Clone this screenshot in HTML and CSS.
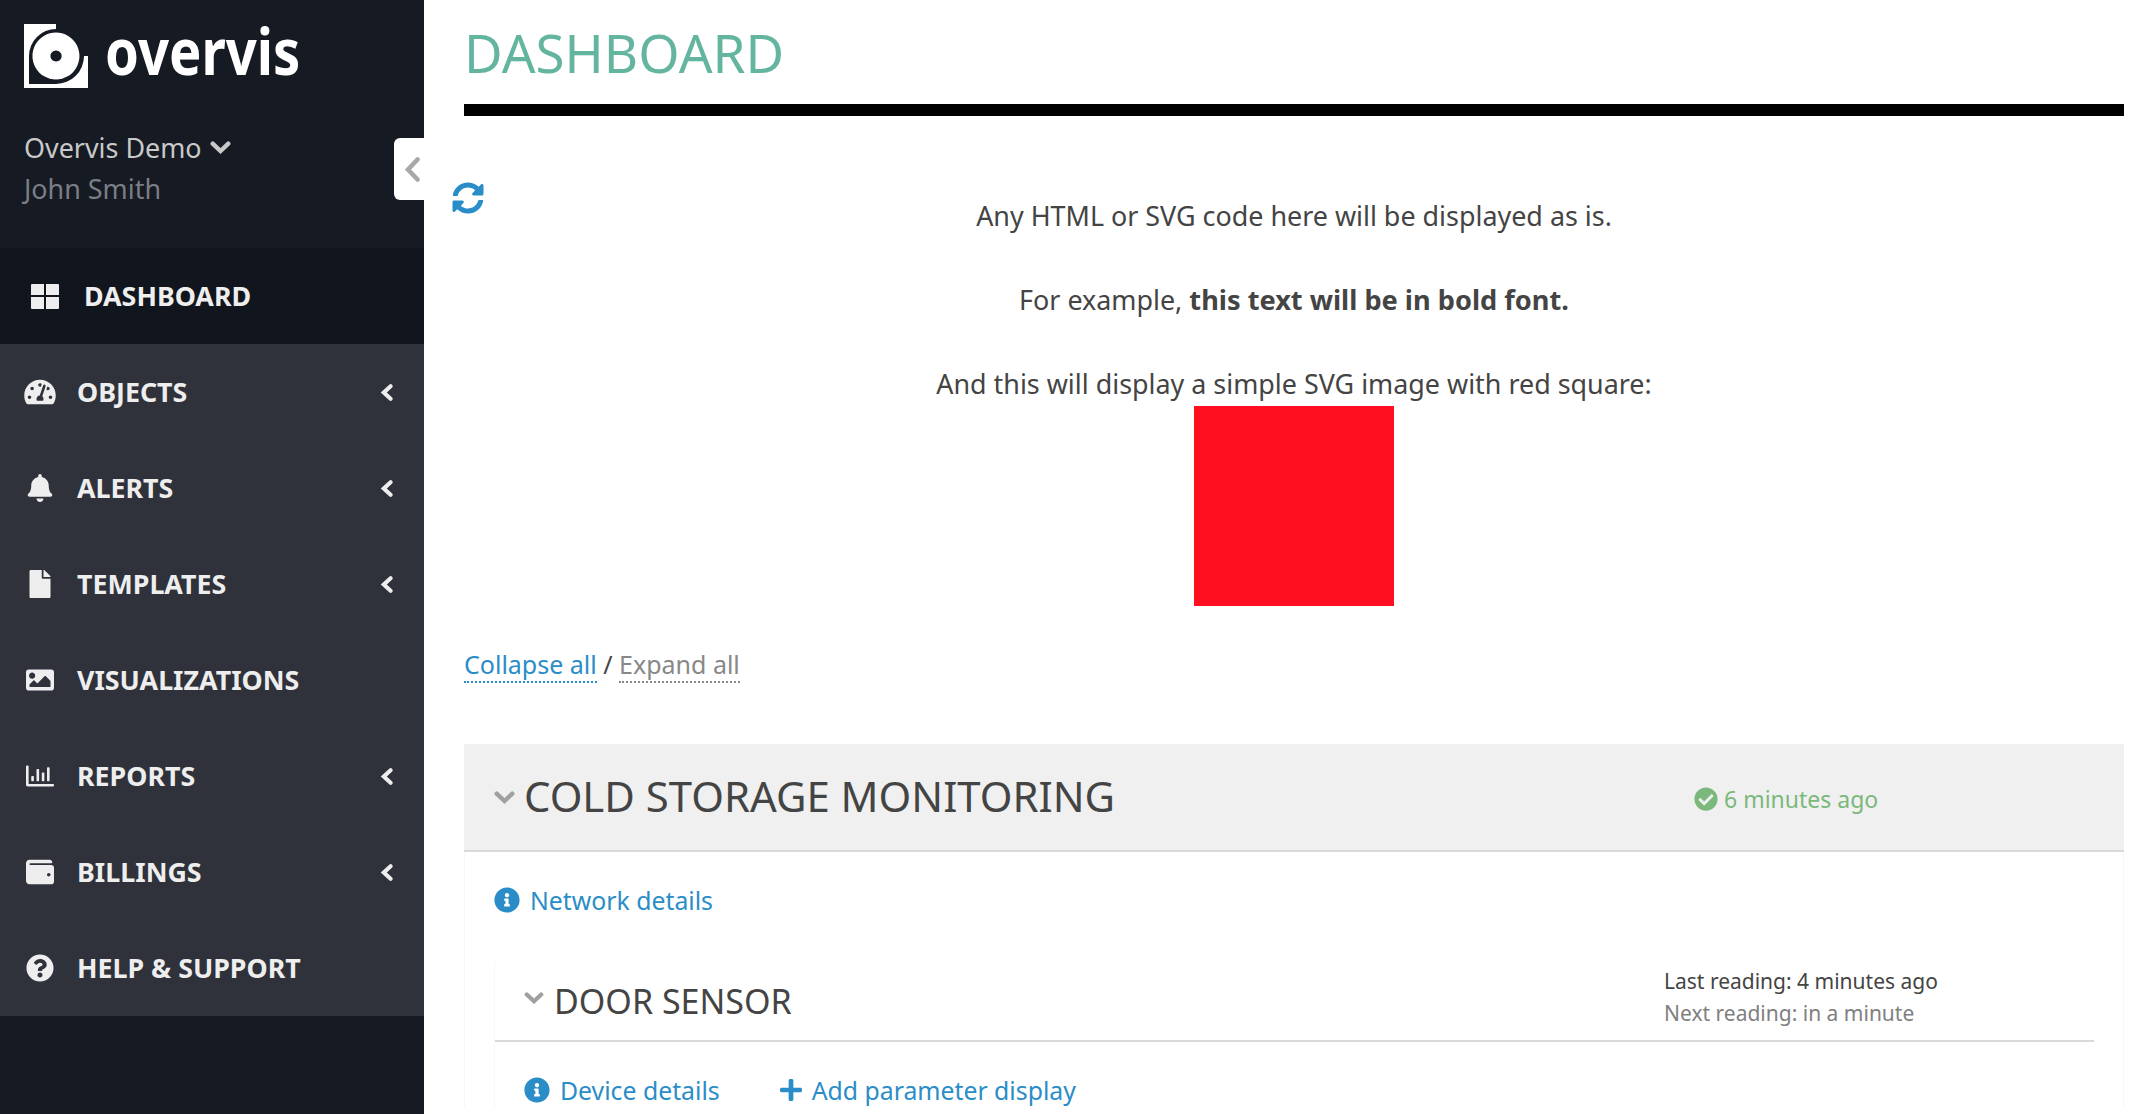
FILE: index.html
```html
<!DOCTYPE html>
<html lang="en">
<head>
<meta charset="utf-8">
<title>Overvis Dashboard</title>
<link rel="stylesheet" href="styles.css">
</head>
<body>
<div class="app">
  <aside class="sidebar">
    <div class="brand">
      <svg class="logo" viewBox="0 0 64 64"><path fill="#fff" d="M0 0H32V5A27 27 0 0 0 5 32V60H32A28 28 0 0 0 60 32H64V64H0Z"/><path fill="#fff" fill-rule="evenodd" d="M32 8.5A23.5 23.5 0 1 1 31.9 8.5ZM32 26.4A5.6 5.6 0 1 0 32.1 26.4Z"/></svg>
      <span class="wordmark">overvis</span>
    </div>
    <div class="account">
      <div class="org">Overvis Demo <svg class="chev-down org-caret" viewBox="0 0 21 13"><path d="M2.7 2.7L10.5 10L18.3 2.7"/></svg></div>
      <div class="user">John Smith</div>
    </div>
    <button class="collapse-tab" aria-label="Collapse"><svg class="chev-left" viewBox="0 0 15 25"><path d="M12.5 2.5L3 12.5L12.5 22.5"/></svg></button>
    <nav class="nav">
      <a class="nav-item active"><span class="nav-icon"><svg class="i-dash" viewBox="0 0 28 25"><path d="M1 0H13V11H0V1A1 1 0 0 1 1 0ZM15 0H27A1 1 0 0 1 28 1V11H15ZM0 13H13V25H1A1 1 0 0 1 0 24ZM15 13H28V24A1 1 0 0 1 27 25H15Z"/></svg></span><span class="nav-label">DASHBOARD</span></a>
      <a class="nav-item"><span class="nav-icon"><svg viewBox="0 0 576 512"><path d="M288 32C128.94 32 0 160.94 0 320c0 52.8 14.25 102.26 39.06 144.8 5.61 9.62 16.3 15.2 27.44 15.2h443c11.14 0 21.83-5.58 27.44-15.2C561.75 422.26 576 372.8 576 320c0-159.06-128.94-288-288-288zm0 64c14.71 0 26.58 10.13 30.32 23.65-1.11 2.26-2.64 4.23-3.45 6.67l-9.22 27.67c-5.13 3.49-10.97 6.01-17.64 6.01-17.67 0-32-14.33-32-32S270.33 96 288 96zM96 384c-17.67 0-32-14.33-32-32s14.33-32 32-32 32 14.33 32 32-14.33 32-32 32zm48-160c-17.67 0-32-14.33-32-32s14.33-32 32-32 32 14.33 32 32-14.33 32-32 32zm246.77-72.41l-61.33 184C343.13 347.33 352 364.54 352 384c0 11.72-3.38 22.55-8.88 32H232.88c-5.5-9.45-8.88-20.28-8.88-32 0-33.94 26.5-61.43 59.9-63.59l61.34-184.01c4.17-12.56 17.73-19.45 30.36-15.17 12.57 4.19 19.35 17.79 15.17 30.36zm14.66 57.2l15.52-46.55c3.47-1.29 7.13-2.23 11.05-2.23 17.67 0 32 14.33 32 32s-14.33 32-32 32c-11.38-.01-20.89-6.28-26.57-15.22zM480 384c-17.67 0-32-14.33-32-32s14.33-32 32-32 32 14.33 32 32-14.33 32-32 32z"/></svg></span><span class="nav-label">OBJECTS</span><svg class="chev-left nav-chev" viewBox="0 0 12 17"><path d="M9.6 2.2L2.8 8.5L9.6 14.8"/></svg></a>
      <a class="nav-item"><span class="nav-icon"><svg viewBox="0 0 448 512"><path d="M224 512c35.32 0 63.97-28.65 63.97-64H160.03c0 35.35 28.65 64 63.97 64zm215.39-149.71c-19.32-20.76-55.47-51.99-55.47-154.29 0-77.7-54.48-139.9-127.94-155.16V32c0-17.67-14.32-32-31.98-32s-31.98 14.33-31.98 32v20.84C118.56 68.1 64.08 130.3 64.08 208c0 102.3-36.15 133.53-55.47 154.29-6 6.45-8.66 14.16-8.61 21.71.11 16.4 12.98 32 32.1 32h383.8c19.12 0 32-15.6 32.1-32 .05-7.55-2.61-15.27-8.61-21.71z"/></svg></span><span class="nav-label">ALERTS</span><svg class="chev-left nav-chev" viewBox="0 0 12 17"><path d="M9.6 2.2L2.8 8.5L9.6 14.8"/></svg></a>
      <a class="nav-item"><span class="nav-icon"><svg viewBox="0 0 384 512"><path d="M224 136V0H24C10.7 0 0 10.7 0 24v464c0 13.3 10.7 24 24 24h336c13.3 0 24-10.7 24-24V160H248c-13.2 0-24-10.8-24-24zm160-14.1v6.1H256V0h6.1c6.4 0 12.5 2.5 17 7l97.9 98c4.5 4.5 7 10.6 7 16.9z"/></svg></span><span class="nav-label">TEMPLATES</span><svg class="chev-left nav-chev" viewBox="0 0 12 17"><path d="M9.6 2.2L2.8 8.5L9.6 14.8"/></svg></a>
      <a class="nav-item"><span class="nav-icon"><svg viewBox="0 0 512 512"><path d="M464 448H48c-26.51 0-48-21.49-48-48V112c0-26.51 21.49-48 48-48h416c26.51 0 48 21.49 48 48v288c0 26.51-21.49 48-48 48zM112 120c-30.928 0-56 25.072-56 56s25.072 56 56 56 56-25.072 56-56-25.072-56-56-56zM64 384h384V272l-87.515-87.515c-4.686-4.686-12.284-4.686-16.971 0L208 320l-55.515-55.515c-4.686-4.686-12.284-4.686-16.971 0L64 336v48z"/></svg></span><span class="nav-label">VISUALIZATIONS</span></a>
      <a class="nav-item"><span class="nav-icon"><svg viewBox="0 0 512 512"><path d="M396.8 352h22.4c6.4 0 12.8-6.4 12.8-12.8V108.8c0-6.4-6.4-12.8-12.8-12.8h-22.4c-6.4 0-12.8 6.4-12.8 12.8v230.4c0 6.4 6.4 12.8 12.8 12.8zm-192 0h22.4c6.4 0 12.8-6.4 12.8-12.8V140.8c0-6.4-6.4-12.8-12.8-12.8h-22.4c-6.4 0-12.8 6.4-12.8 12.8v198.4c0 6.4 6.4 12.8 12.8 12.8zm96 0h22.4c6.4 0 12.8-6.4 12.8-12.8V204.8c0-6.4-6.4-12.8-12.8-12.8h-22.4c-6.4 0-12.8 6.4-12.8 12.8v134.4c0 6.4 6.4 12.8 12.8 12.8zM496 400H48V80c0-8.84-7.16-16-16-16H16C7.16 64 0 71.16 0 80v336c0 17.67 14.33 32 32 32h464c8.84 0 16-7.16 16-16v-16c0-8.84-7.16-16-16-16zm-387.2-48h22.4c6.4 0 12.8-6.4 12.8-12.8v-70.4c0-6.4-6.4-12.8-12.8-12.8h-22.4c-6.4 0-12.8 6.4-12.8 12.8v70.4c0 6.4 6.4 12.8 12.8 12.8z"/></svg></span><span class="nav-label">REPORTS</span><svg class="chev-left nav-chev" viewBox="0 0 12 17"><path d="M9.6 2.2L2.8 8.5L9.6 14.8"/></svg></a>
      <a class="nav-item"><span class="nav-icon"><svg viewBox="0 0 512 512"><path d="M461.2 128H80c-8.84 0-16-7.16-16-16s7.16-16 16-16h384c8.84 0 16-7.16 16-16 0-26.51-21.49-48-48-48H64C28.65 32 0 60.65 0 96v320c0 35.35 28.65 64 64 64h397.2c28.02 0 50.8-21.53 50.8-48V176c0-26.47-22.78-48-50.8-48zM416 336c-17.67 0-32-14.33-32-32s14.33-32 32-32 32 14.33 32 32-14.33 32-32 32z"/></svg></span><span class="nav-label">BILLINGS</span><svg class="chev-left nav-chev" viewBox="0 0 12 17"><path d="M9.6 2.2L2.8 8.5L9.6 14.8"/></svg></a>
      <a class="nav-item"><span class="nav-icon"><svg viewBox="0 0 512 512"><path d="M504 256c0 136.997-111.043 248-248 248S8 392.997 8 256C8 119.083 119.043 8 256 8s248 111.083 248 248zM262.655 90c-54.497 0-89.255 22.957-116.549 63.758-3.536 5.286-2.353 12.415 2.715 16.258l34.699 26.31c5.205 3.947 12.621 3.008 16.665-2.122 17.864-22.658 30.113-35.797 57.303-35.797 20.429 0 45.698 13.148 45.698 32.958 0 14.976-12.363 22.667-32.534 33.976C247.128 238.528 216 254.941 216 296v4c0 6.627 5.373 12 12 12h56c6.627 0 12-5.373 12-12v-1.333c0-28.462 83.186-29.647 83.186-106.667 0-58.002-60.165-102-116.531-102zM256 338c-25.365 0-46 20.635-46 46 0 25.364 20.635 46 46 46s46-20.636 46-46c0-25.365-20.635-46-46-46z"/></svg></span><span class="nav-label">HELP &amp; SUPPORT</span></a>
    </nav>
  </aside>
  <main class="main">
    <h1 class="title">DASHBOARD</h1>
    <div class="custom">
      <svg class="refresh" viewBox="0 0 512 512"><path d="M370.72 133.28C339.458 104.008 298.888 87.962 255.848 88c-77.458.068-144.328 53.178-162.791 126.85-1.344 5.363-6.122 9.15-11.651 9.15H24.103c-7.498 0-13.194-6.807-11.807-14.176C33.933 94.924 134.813 8 256 8c66.448 0 126.791 26.136 171.315 68.685L463.03 40.97C478.149 25.851 504 36.559 504 57.941V192c0 13.255-10.745 24-24 24H345.941c-21.382 0-32.09-25.851-16.971-40.971l41.75-41.749zM32 296h134.059c21.382 0 32.09 25.851 16.971 40.971l-41.75 41.75c31.262 29.273 71.835 45.319 114.876 45.28 77.418-.07 144.315-53.144 162.787-126.849 1.344-5.363 6.122-9.15 11.651-9.15h57.304c7.498 0 13.194 6.807 11.807 14.176C478.067 417.076 377.187 504 256 504c-66.448 0-126.791-26.136-171.315-68.685L48.97 471.03C33.851 486.149 8 475.441 8 454.059V320c0-13.255 10.745-24 24-24z"/></svg>
      <p>Any HTML or SVG code here will be displayed as is.</p>
      <p>For example, <b class="strong">this text will be in bold font.</b></p>
      <p class="last">And this will display a simple SVG image with red square:</p>
      <svg class="square" viewBox="0 0 200 200"><rect width="200" height="200" fill="#ff0f1f"/></svg>
    </div>
    <div class="toggles"><a class="toggle blue">Collapse all</a> / <a class="toggle grey">Expand all</a></div>
    <section class="panel">
      <header class="panel-head">
        <svg class="chev-down caret-l" viewBox="0 0 21 13"><path d="M2.7 2.7L10.5 10L18.3 2.7"/></svg>
        <h2 class="panel-title">COLD STORAGE MONITORING</h2>
        <span class="status"><svg viewBox="0 0 512 512"><path d="M504 256c0 136.967-111.033 248-248 248S8 392.967 8 256 119.033 8 256 8s248 111.033 248 248zM227.314 387.314l184-184c6.248-6.248 6.248-16.379 0-22.627l-22.627-22.627c-6.248-6.249-16.379-6.249-22.628 0L216 308.118l-70.059-70.059c-6.248-6.248-16.379-6.248-22.628 0l-22.627 22.627c-6.248 6.248-6.248 16.379 0 22.627l104 104c6.249 6.249 16.379 6.249 22.628.001z"/></svg>6 minutes ago</span>
      </header>
      <div class="panel-body">
        <a class="link net"><svg viewBox="0 0 512 512"><path d="M256 8C119.043 8 8 119.083 8 256c0 136.997 111.043 248 248 248s248-111.003 248-248C504 119.083 392.957 8 256 8zm0 110c23.196 0 42 18.804 42 42s-18.804 42-42 42-42-18.804-42-42 18.804-42 42-42zm56 254c0 6.627-5.373 12-12 12h-88c-6.627 0-12-5.373-12-12v-24c0-6.627 5.373-12 12-12h12v-64h-12c-6.627 0-12-5.373-12-12v-24c0-6.627 5.373-12 12-12h64c6.627 0 12 5.373 12 12v100h12c6.627 0 12 5.373 12 12v24z"/></svg>Network details</a>
        <section class="device">
          <header class="device-head">
            <svg class="chev-down caret-s" viewBox="0 0 21 13"><path d="M2.7 2.7L10.5 10L18.3 2.7"/></svg>
            <h3 class="device-title">DOOR SENSOR</h3>
            <div class="readings"><div class="last-reading">Last reading: 4 minutes ago</div><div class="next-reading">Next reading: in a minute</div></div>
          </header>
          <div class="device-links">
            <a class="link"><svg viewBox="0 0 512 512"><path d="M256 8C119.043 8 8 119.083 8 256c0 136.997 111.043 248 248 248s248-111.003 248-248C504 119.083 392.957 8 256 8zm0 110c23.196 0 42 18.804 42 42s-18.804 42-42 42-42-18.804-42-42 18.804-42 42-42zm56 254c0 6.627-5.373 12-12 12h-88c-6.627 0-12-5.373-12-12v-24c0-6.627 5.373-12 12-12h12v-64h-12c-6.627 0-12-5.373-12-12v-24c0-6.627 5.373-12 12-12h64c6.627 0 12 5.373 12 12v100h12c6.627 0 12 5.373 12 12v24z"/></svg>Device details</a>
            <a class="link"><svg class="plus" viewBox="0 0 448 512"><path d="M416 208H272V64c0-17.67-14.33-32-32-32h-32c-17.67 0-32 14.33-32 32v144H32c-17.67 0-32 14.33-32 32v32c0 17.67 14.33 32 32 32h144v144c0 17.67 14.33 32 32 32h32c17.67 0 32-14.33 32-32V304h144c17.67 0 32-14.33 32-32v-32c0-17.67-14.33-32-32-32z"/></svg>Add parameter display</a>
          </div>
        </section>
      </div>
    </section>
  </main>
</div>
</body>
</html>
```
FILE: styles.css
```css
html, body { margin: 0; height: 100%; overflow: hidden; background: #fff; }
body { font-family: "Noto Sans", "Open Sans", sans-serif; font-size: 26.9px; line-height: 36px; color: #444; }
svg { display: block; fill: currentColor; flex: none; }
.chev-left, .chev-down { fill: none; stroke: currentColor; stroke-linecap: round; stroke-linejoin: miter; }
.app { display: flex; height: 1114px; overflow: hidden; }

.sidebar { position: relative; width: 424px; flex: none; background: #151a23; color: #eee; }
.brand { display: flex; align-items: flex-start; gap: 17px; height: 127px; padding: 24px 0 0 24px; box-sizing: border-box; }
.logo { width: 64px; height: 64px; }
.wordmark { display: block; font-weight: 700; font-size: 64px; line-height: 54px; color: #fff; transform: scaleX(.85); transform-origin: left center; }
.account { height: 121px; padding-left: 24px; box-sizing: border-box; font-size: 26.9px; line-height: 41px; }
.org { display: flex; align-items: center; gap: 8px; color: #c9c9c9; }
.org-caret { width: 21px; height: 13px; stroke-width: 4.4; }
.user { color: #7b7e85; }
.collapse-tab { position: absolute; top: 138px; right: 0; width: 30px; height: 62px; padding: 0 0 0 11px; border: 0; background: #fff; border-radius: 6px 0 0 6px; color: #a8a8a8; }
.collapse-tab svg { width: 15px; height: 25px; stroke-width: 4.6; }

.nav { display: flex; flex-direction: column; }
.nav-item { display: flex; align-items: center; height: 96px; padding: 0 31px 0 24px; background: #2f323b; font-weight: 700; font-size: 26.8px; color: #eee; }
.nav-icon { display: flex; justify-content: center; width: 32px; padding-right: 21px; }
.nav-icon svg { width: 32px; height: 28px; }
.nav-item.active { background: #11151d; }
.nav-item.active .nav-icon { width: 28px; padding: 0 25px 0 7px; }
.nav-item.active .nav-icon svg { width: 28px; height: 25px; }
.nav-label { flex: 1; }
.nav-chev { width: 12px; height: 17px; stroke-width: 4; }

.main { flex: 1; min-width: 0; padding: 0 32px 0 40px; }
.title { margin: 0; height: 104px; border-bottom: 12px solid #000; font-weight: 400; font-size: 53px; line-height: 106px; color: #64b5a0; }
.custom { position: relative; padding-top: 82px; text-align: center; }
.custom p { margin: 0 0 48px; }
.custom p.last { margin: 0 0 4px; }
.strong { font-size: 27.2px; }
.square { width: 200px; height: 200px; margin: 0 auto; }
.refresh { position: absolute; left: -12px; top: 66px; width: 32px; height: 32px; color: #2a8dc7; }
.toggles { margin-top: 40px; font-size: 25px; }
.toggle { border-bottom: 2px dotted; }
.blue { color: #2a8dc7; }
.grey { color: #888; }

.panel { margin-top: 62px; }
.panel-head { display: flex; align-items: center; height: 106px; padding-left: 30px; background: #f0f0f0; border-bottom: 2px solid #d9d9d9; }
.caret-l { width: 21px; height: 13px; margin-right: 9px; stroke-width: 4.4; color: #a0a0a0; }
.panel-title { margin: 0 0 2px; flex: 1; font-weight: 400; font-size: 41.9px; line-height: 60px; }
.status { display: flex; align-items: center; gap: 6px; width: 430px; padding-top: 3px; font-size: 23px; color: #7ab87c; }
.status svg { width: 24px; height: 24px; }
.panel-body { padding: 0 29px; border: solid #f8f8f8; border-width: 0 1px; }
.link { display: inline-flex; align-items: center; gap: 10px; font-size: 24.8px; color: #2a8dc7; }
.link svg { width: 26px; height: 26px; }
.link .plus { width: 22px; height: 26px; }
.net { margin-top: 30px; }
.device { margin-top: 40px; border-left: 1px solid #f8f8f8; }
.device-head { display: flex; align-items: center; height: 79px; padding-left: 29px; border-bottom: 2px solid #d9d9d9; }
.caret-s { width: 20px; height: 12px; margin: 0 10px 6px 0; stroke-width: 4.6; color: #a0a0a0; }
.device-title { margin: 0; flex: 1; font-weight: 400; font-size: 34px; }
.readings { width: 430px; margin-bottom: 7px; font-size: 21px; line-height: 32px; }
.next-reading { color: #808080; }
.device-links { display: flex; gap: 60px; padding: 30px 0 0 29px; }
```
